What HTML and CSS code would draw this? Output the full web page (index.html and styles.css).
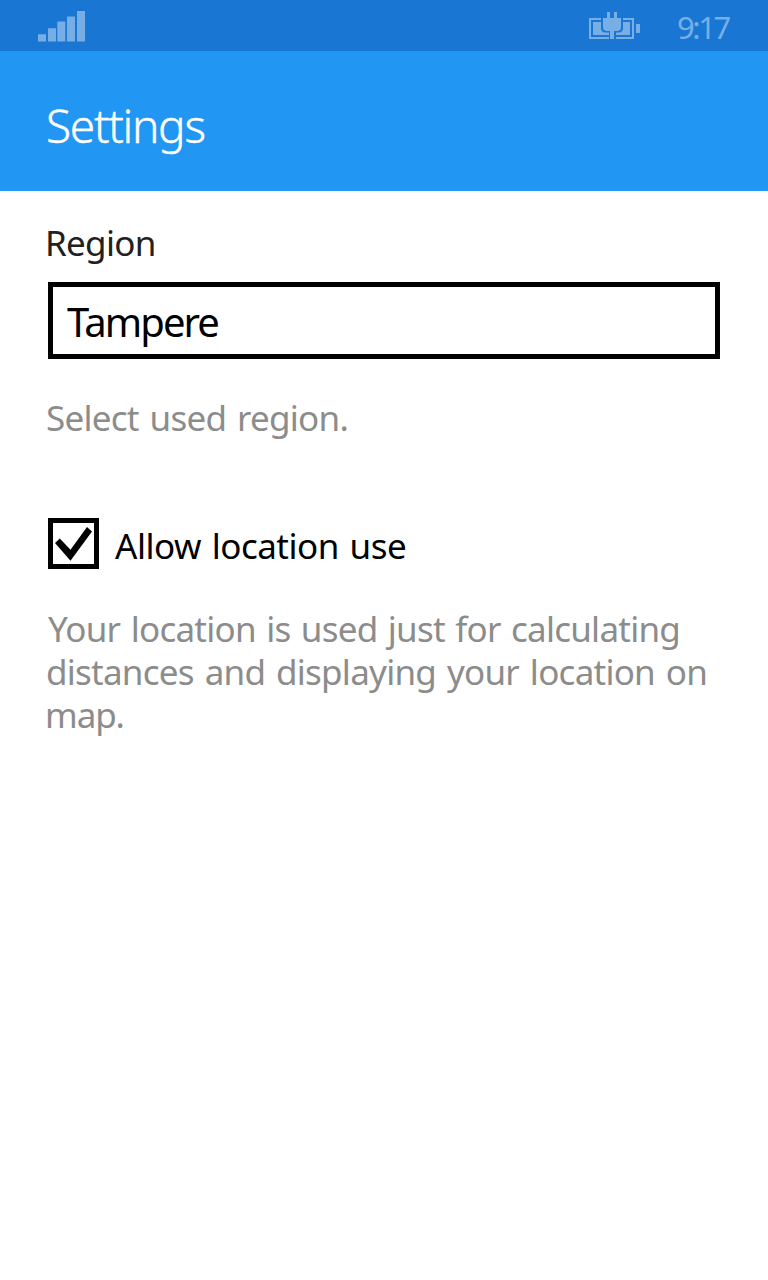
FILE: index.html
```html
<!DOCTYPE html>
<html lang="en">
<head>
<meta charset="utf-8">
<title>Settings</title>
<link rel="stylesheet" href="styles.css">
</head>
<body>
<div class="status-bar">
  <svg class="signal" width="48" height="32" viewBox="0 0 48 32" fill="currentColor">
    <path d="M0 24.3h8V31.500H0zM10 18.300h8V31.500h-8zM19.300 11.500h8V31.500h-8zM29 6.500h8V31.500h-8zM39 1h8V31.500h-8z"/>
  </svg>
  <svg class="battery" width="52" height="28" viewBox="0 0 52 28" fill="currentColor">
    <path d="M0 6h12v2H2v17h18v2H0zM34 6h11v21H27v-2h16V8h-9zM47 12h4v9h-4z"/>
    <path d="M4 10h8v6q0 4.500 5 4.500h3V23H4zM41 10h-7v6q0 4.500-5 4.500h-2V23h14z"/>
    <path d="M18 0h3v6h4V0h3v6h4v9q0 4-4 4h-3v8h-4v-8h-3q-4 0-4-4V6h4z"/>
  </svg>
  <time class="clock">9:17</time>
</div>
<header class="title-bar"><h1 class="title">Settings</h1></header>
<main class="content">
  <label class="label" for="region">Region</label>
  <div class="select" id="region">Tampere</div>
  <p class="hint hint-region">Select used region.</p>
  <div class="check-row">
    <span class="checkbox">
      <svg width="41" height="41" viewBox="0 0 41 41"><path d="M2 20L6.800 15.500L17.500 26.800L34 4L39 8.500L17.500 37.800z"/></svg>
    </span>
    <span class="check-text">Allow location use</span>
  </div>
  <p class="hint hint-location"><span class="line-one">Your location is used just for calculating</span><br>distances and displaying your location on<br><span class="line-three">map.</span></p>
</main>
</body>
</html>
```
FILE: styles.css
```css
* { box-sizing: border-box; }
body { margin: 0; background: #fff; font-family: "Noto Sans", sans-serif; font-size: 35px; font-weight: 400; line-height: 43px; color: #000; }
.status-bar { height: 51px; background: #1976d2; color: #78aee6; display: flex; align-items: flex-start; padding: 10px 0 0 38px; }
.signal { display: block; }
.battery { display: block; margin: 2px 36px 0 503px; }
.clock { padding-top: 1px; font-size: 31px; font-weight: 400; line-height: 32px; white-space: nowrap; letter-spacing: -2.4px; }
.title-bar { height: 140px; background: #2196f3; padding: 45px 46px 0; }
.title { margin: 0; color: #fff; font-size: 46px; font-weight: 300; line-height: 58px; white-space: nowrap; letter-spacing: -1.3px; -webkit-text-stroke: 0.4px #fff; }
.content { padding: 30px 48px 0 46px; }
.label { display: block; margin-left: -1px; color: #212121; white-space: nowrap; letter-spacing: -0.7px; }
.select { height: 77px; margin: 18px 0 0 2px; border: 5px solid #000; padding: 10px 14px; font-size: 40px; line-height: 49px; white-space: nowrap; letter-spacing: -1.9px; }
.hint { margin: 0; color: #8b8c8b; white-space: nowrap; letter-spacing: -0.75px; word-spacing: 2.5px; }
.hint-region { margin-top: 37px; }
.check-row { display: flex; align-items: flex-start; margin: 79px 0 0 2px; white-space: nowrap; letter-spacing: -0.48px; word-spacing: 2px; }
.checkbox { width: 51px; height: 51px; border: 5px solid #000; margin-right: 16px; }
.checkbox svg { display: block; }
.check-text { padding-top: 6px; }
.hint-location { margin-top: 38px; }
.line-one { margin-left: 2px; letter-spacing: -0.75px; word-spacing: 2px; }
.line-three { margin-left: -1px; letter-spacing: -1.1px; }
```
